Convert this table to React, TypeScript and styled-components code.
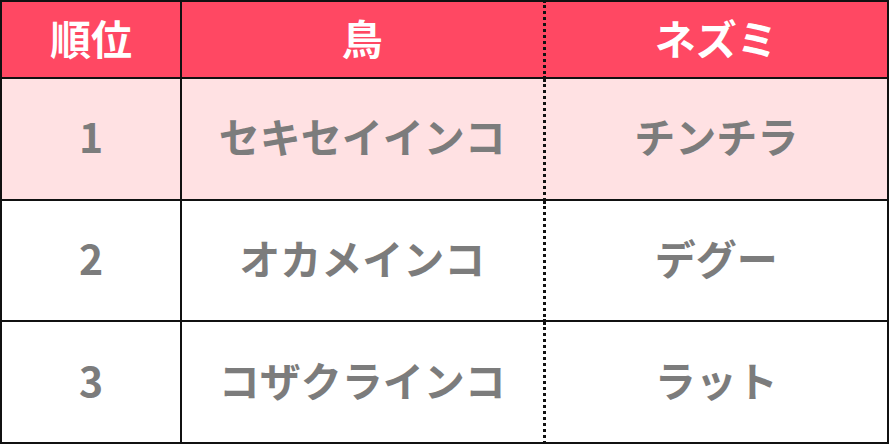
import React from 'react';
import styled, { createGlobalStyle } from 'styled-components';

const GlobalStyle = createGlobalStyle`
    body {
        margin: 0;
        background: #ffffff;
        font-family: "Noto Sans CJK JP", "Noto Sans", sans-serif;
    }
`;

const Table = styled.table`
    width: 887px;
    border-collapse: collapse;
    table-layout: fixed;
    border: 2px solid #111;
`;

const HeadCell = styled.th`
    box-sizing: border-box;
    height: 77px;
    padding: 0 0 5px;
    background: #ff4863;
    color: #ffffff;
    font-size: 41px;
    font-weight: 700;
    line-height: 1;
    text-align: center;
    border: 2px solid #111;
    &.dotted-left {
        border-left: 3px dotted #111;
    }
`;

const Row = styled.tr<{ $highlight?: boolean }>`
    background: ${(p) => (p.$highlight ? '#ffe1e3' : '#ffffff')};
`;

const Cell = styled.td`
    box-sizing: border-box;
    height: 121.7px;
    padding: 0 0 6px;
    color: #7c7c7c;
    font-size: 41px;
    font-weight: 700;
    line-height: 1;
    text-align: center;
    border: 2px solid #111;
    &.dotted-left {
        border-left: 3px dotted #111;
    }
`;

const rows = [
    { rank: '1', bird: 'セキセイインコ', mouse: 'チンチラ' },
    { rank: '2', bird: 'オカメインコ', mouse: 'デグー' },
    { rank: '3', bird: 'コザクラインコ', mouse: 'ラット' },
];

const App: React.FC = () => {
    return (
        <>
            <GlobalStyle />
            <Table>
                <colgroup>
                    <col style={{ width: 180 }} />
                    <col style={{ width: 363 }} />
                    <col style={{ width: 344 }} />
                </colgroup>
                <thead>
                    <tr>
                        <HeadCell>順位</HeadCell>
                        <HeadCell>鳥</HeadCell>
                        <HeadCell className="dotted-left">ネズミ</HeadCell>
                    </tr>
                </thead>
                <tbody>
                    {rows.map((r, i) => (
                        <Row key={r.rank} $highlight={i === 0}>
                            <Cell>{r.rank}</Cell>
                            <Cell>{r.bird}</Cell>
                            <Cell className="dotted-left">{r.mouse}</Cell>
                        </Row>
                    ))}
                </tbody>
            </Table>
        </>
    );
};

export default App;
